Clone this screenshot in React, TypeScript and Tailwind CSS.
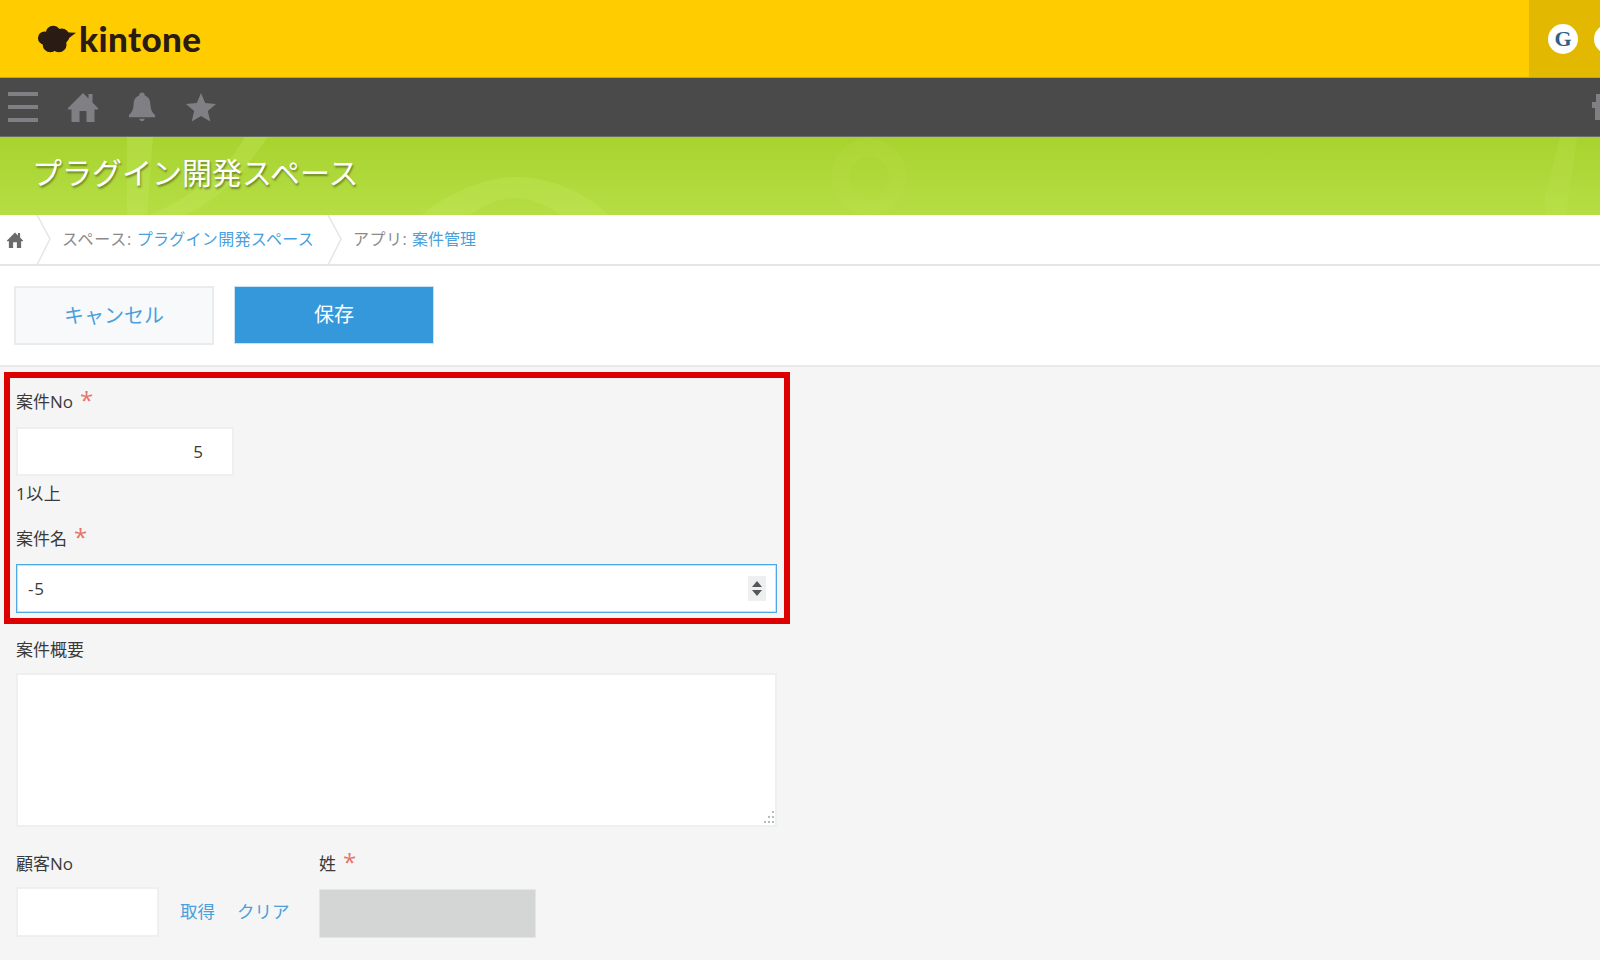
import React from "react";

const font = "font-['Open_Sans','Noto_Sans_CJK_JP',sans-serif]";

function Cloud() {
  return (
    <svg width="40" height="30" viewBox="0 0 42 30" className="shrink-0">
      <g fill="#2a1c14">
        <circle cx="8" cy="14" r="7" />
        <circle cx="17" cy="9" r="8" />
        <circle cx="26" cy="12" r="8" />
        <circle cx="14" cy="21" r="8" />
        <circle cx="23" cy="21" r="8" />
        <path d="M28 8 L41 8.5 L31 16 Z" />
      </g>
    </svg>
  );
}

function Home({ size = 30, color = "#807f84" }: { size?: number; color?: string }) {
  return (
    <svg width={size} height={size} viewBox="0 0 30 30" className="shrink-0">
      <path fill={color} d="M15 1 L20.5 6.5 V2 H24.5 V10.5 L30 16 V17.5 H26.5 V30 H18.5 V19 H11.5 V30 H3.5 V17.5 H0 V16 Z" />
    </svg>
  );
}

function Bell() {
  return (
    <svg width="28" height="30" viewBox="0 0 30 31" className="shrink-0">
      <path fill="#807f84" d="M15 0 C17 0 18 1.5 18 3.2 C22.5 4.8 23.8 8.5 24 13 C24.3 18.5 26 21.5 29 24 V26.5 H1 V24 C4 21.5 5.7 18.5 6 13 C6.2 8.5 7.5 4.8 12 3.2 C12 1.5 13 0 15 0 Z M12 28 H18 C17.5 29.8 16.5 30.5 15 30.5 C13.5 30.5 12.5 29.8 12 28 Z" />
    </svg>
  );
}

function Star() {
  return (
    <svg width="30" height="29" viewBox="0 0 30 29" className="shrink-0">
      <path fill="#807f84" d="M15 0 L19.2 10 L30 10.9 L21.8 18 L24.3 28.6 L15 23 L5.7 28.6 L8.2 18 L0 10.9 L10.8 10 Z" />
    </svg>
  );
}

function Chevron() {
  return (
    <svg width="16" height="50" viewBox="0 0 16 50" className="shrink-0">
      <path d="M1 0 L14 24 L1 50" fill="none" stroke="#e3e6e6" strokeWidth="1.5" />
    </svg>
  );
}

function Label({ text, required, className = "" }: { text: string; required?: boolean; className?: string }) {
  return (
    <div className={`flex items-start h-[24px] text-[17px] leading-[25px] text-[#3a3a3a] ${className}`}>
      <span>{text}</span>
      {required && <span className="ml-[7px] text-[#e8736b] text-[24px] leading-[21px]">*</span>}
    </div>
  );
}

export default function App() {
  return (
    <div className={`w-[1600px] h-[960px] overflow-hidden bg-[#f5f5f5] ${font}`}>
      <header className="flex h-[78px] items-stretch justify-between bg-[#ffcc00] border-b border-[#c9a21a]">
        <div className="flex items-center pl-[37px] gap-[2px]">
          <Cloud />
          <span className="font-['Lato','Noto_Sans',sans-serif] font-black text-[35px] leading-none text-[#2a1c14] tracking-[0.4px]">kintone</span>
        </div>
        <div className="flex w-[71px] items-center gap-[16px] overflow-hidden bg-[#e3b800] pl-[19px]">
          <div className="flex h-[30px] w-[30px] shrink-0 items-center justify-center rounded-full bg-white font-['Liberation_Serif',serif] text-[22px] font-bold text-[#2f5f85]">G</div>
          <div className="h-[30px] w-[30px] shrink-0 rounded-full bg-white" />
        </div>
      </header>

      <nav className="flex h-[59px] items-center justify-between overflow-hidden bg-[#4a4a4a] border-b border-[#6b6b6b] pl-[8px]">
        <div className="flex items-center">
          <div className="flex h-[30px] w-[30px] flex-col justify-between">
            <div className="h-[4px] bg-[#807f84]" />
            <div className="h-[4px] bg-[#807f84]" />
            <div className="h-[4px] bg-[#807f84]" />
          </div>
          <div className="ml-[30px]"><Home /></div>
          <div className="ml-[30px]"><Bell /></div>
          <div className="ml-[30px]"><Star /></div>
        </div>
        <svg width="8" height="26" viewBox="0 0 8 26" className="shrink-0">
          <path fill="#807f84" d="M8 0 H4 V8 H0 V14 H3 V26 H8 Z" />
        </svg>
      </nav>

      <div className="relative flex h-[78px] items-center overflow-hidden bg-gradient-to-b from-[#a8d32e] to-[#b5de44] pb-[7px] pl-[32px]">
        <svg className="absolute inset-0" width="1600" height="78" viewBox="0 0 1600 78">
          <g fill="#c4e85c" fillOpacity="0.35">
            <path d="M127 0 H153 L147 78 H127 Z" />
            <path d="M245 0 H268 C240 40 215 65 185 78 H150 C190 60 225 35 245 0 Z" />
            <path d="M421 78 C450 55 485 40 515 40 C550 40 585 55 609 78 H560 C545 67 530 61 515 61 C500 61 485 67 470 78 Z" />
            <path fillRule="evenodd" d="M869 2 a38 38 0 1 0 0.01 0 Z M869 20 a20 20 0 1 1 -0.01 0 Z" fillOpacity="0.12" />
            <path d="M1560 0 H1577 L1566 78 H1546 L1545 60 Z" fillOpacity="0.2" />
          </g>
        </svg>
        <span className="relative text-[30px] leading-none text-white [text-shadow:1px_2px_2px_rgba(70,90,30,0.65)]">プラグイン開発スペース</span>
      </div>

      <div className="flex h-[51px] items-stretch bg-white border-b-2 border-[#e3e6e6] text-[16px]">
        <div className="flex items-center pl-[7px] pr-[13px]"><Home size={16} color="#6b6b6b" /></div>
        <Chevron />
        <div className="flex items-center pb-[2px] pl-[10px] pr-[13px] text-[#8a8a8a]">
          <span className="tracking-[0.7px]">スペース:&nbsp;</span><span className="tracking-[0.3px] text-[#4a9fdc]">プラグイン開発スペース</span>
        </div>
        <Chevron />
        <div className="flex items-center pb-[2px] pl-[10px] text-[#8a8a8a]">
          <span className="tracking-[0.5px]">アプリ:&nbsp;</span><span className="text-[#4a9fdc]">案件管理</span>
        </div>
      </div>

      <div className="flex h-[101px] items-start gap-[20px] bg-white border-b-2 border-[#e8e9e9] pl-[14px] pt-[20px]">
        <button className="h-[59px] w-[200px] bg-[#f7f9fa] border-2 border-[#e9ecec] text-[20px] text-[#4a9fdc]">キャンセル</button>
        <button className="h-[58px] w-[200px] bg-[#3498db] border border-[#c9e1f3] text-[20px] text-white">保存</button>
      </div>

      <main className="pl-[4px] pt-[5px]">
        <div className="h-[252px] w-[786px] border-[6px] border-[#dc0000] pl-[6px] pt-[11px]">
          <Label text="案件No" required />
          <div className="mt-[14px] flex h-[49px] w-[218px] items-center justify-end border-2 border-[#eef0f0] bg-white pr-[29px] text-[17px] text-[#3a3a3a]">5</div>
          <div className="mt-[6px] h-[24px] text-[17px] leading-[24px] tracking-[0.5px] text-[#3a3a3a]">1以上</div>
          <Label text="案件名" required className="mt-[20px]" />
          <div className="mt-[14px] flex h-[49px] w-[761px] items-center justify-between border border-[#4fa8e6] bg-white pl-[11px] pr-[10px] text-[17px] text-[#3a3a3a] shadow-[inset_0_0_0_1px_rgba(90,174,230,0.35)]">
            <span className="tracking-[0.8px]">-5</span>
            <div className="flex h-[25px] w-[18px] flex-col items-center justify-center gap-[3px] bg-[#eef0f0]">
              <div className="h-0 w-0 border-x-[5px] border-b-[6px] border-x-transparent border-b-[#55585a]" />
              <div className="h-0 w-0 border-x-[5px] border-t-[6px] border-x-transparent border-t-[#55585a]" />
            </div>
          </div>
        </div>

        <div className="pl-[12px]">
          <Label text="案件概要" className="mt-[13px]" />
          <div className="relative mt-[12px] h-[154px] w-[761px] border-2 border-[#eef0f0] bg-white">
            <svg className="absolute bottom-[0px] right-[0px]" width="12" height="14" viewBox="0 0 12 14">
              <g fill="#b5bcbc">
                <rect x="9" y="0" width="2" height="2" />
                <rect x="9" y="5" width="2" height="2" />
                <rect x="5" y="5" width="2" height="2" />
                <rect x="9" y="10" width="2" height="2" />
                <rect x="5" y="10" width="2" height="2" />
                <rect x="1" y="10" width="2" height="2" />
              </g>
            </svg>
          </div>

          <div className="mt-[24px] flex items-start">
            <div className="w-[303px]">
              <Label text="顧客No" />
              <div className="mt-[12px] flex items-center">
                <div className="h-[50px] w-[143px] border-2 border-[#eef0f0] bg-white" />
                <a className="mb-[2px] ml-[21px] text-[17.5px] text-[#4a9fdc]">取得</a>
                <a className="mb-[2px] ml-[22px] text-[17.5px] text-[#4a9fdc]">クリア</a>
              </div>
            </div>
            <div>
              <Label text="姓" required />
              <div className="mt-[14px] h-[49px] w-[217px] border border-[#e3e6e6] bg-[#d4d6d5]" />
            </div>
          </div>
        </div>
      </main>
    </div>
  );
}
